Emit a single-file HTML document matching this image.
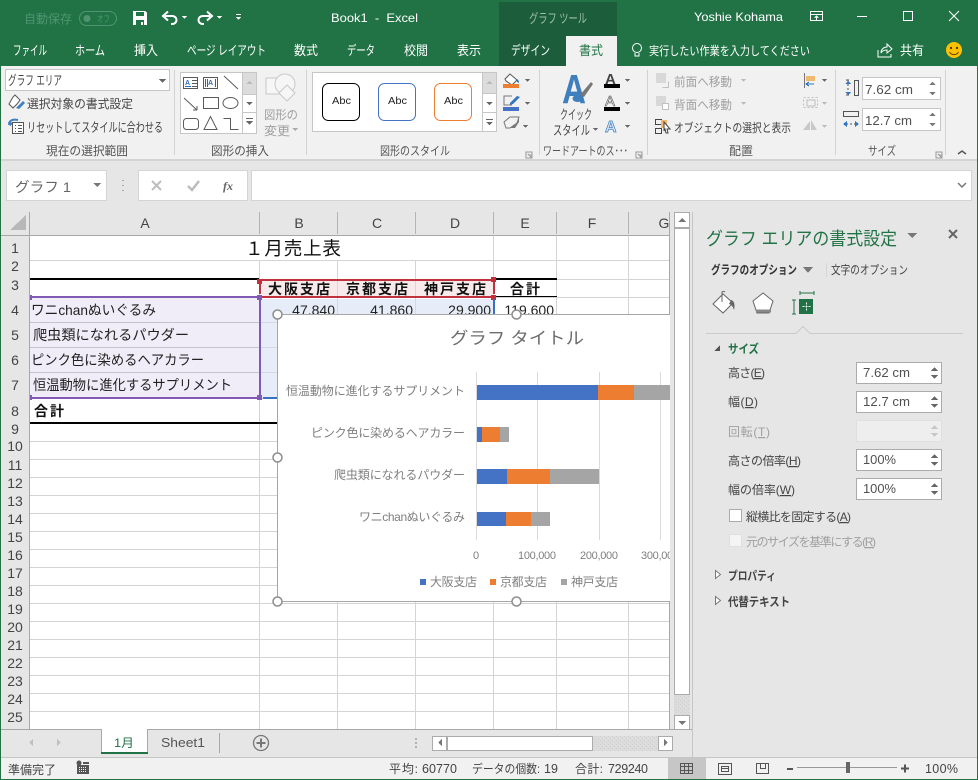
<!DOCTYPE html>
<html lang="ja"><head><meta charset="utf-8"><title>Book1 - Excel</title>
<style>
html,body{margin:0;padding:0;background:#e6e6e6;width:978px;height:780px;overflow:hidden}
svg{display:block}
text{font-family:"Liberation Sans","Noto Sans CJK JP",sans-serif;font-size:12px;fill:#444}
.w{fill:#fff}.t{fill:#fff;font-size:13px}.g{fill:#a0a0a0}.k{fill:#111}.c{font-size:14px;fill:#222}.b{font-size:14px;font-weight:bold;fill:#111}
.h{font-size:14px;fill:#444;text-anchor:middle}.n{font-size:14px;fill:#222;text-anchor:end}
.l{font-size:12px;fill:#555}.ch{font-size:12px;fill:#7f7f7f}.ax{font-size:11px;fill:#7f7f7f}.v{font-size:12px;fill:#505050}
</style></head><body>
<svg width="978" height="780" viewBox="0 0 978 780" xmlns="http://www.w3.org/2000/svg" shape-rendering="crispEdges">
<defs>
<clipPath id="chartclip"><rect x="277" y="314" width="393" height="288"/></clipPath>
<clipPath id="rowclip"><rect x="0" y="235" width="29" height="495"/></clipPath>
<pattern id="dots" width="4" height="4" patternUnits="userSpaceOnUse"><rect width="4" height="4" fill="#dcdcdc"/><rect width="1" height="1" fill="#cfcfcf"/><rect x="2" y="2" width="1" height="1" fill="#cfcfcf"/></pattern>
</defs>
<rect width="978" height="780" fill="#e6e6e6"/>
<!-- title bar -->
<rect width="978" height="66" fill="#217346"/>
<rect x="499" y="2" width="118" height="64" fill="#1c5e3b"/>
<rect x="566" y="36" width="51" height="30" fill="#f1f1f1"/>
<text x="24" y="23" textLength="48" lengthAdjust="spacingAndGlyphs" style="fill:#4f9470">自動保存</text>
<rect x="79.500" y="11.500" width="37" height="14" rx="7" fill="none" stroke="#4f9470"/>
<circle cx="87" cy="18.500" r="3.500" fill="#4f9470" shape-rendering="auto"/>
<text x="97" y="22" textLength="13" lengthAdjust="spacingAndGlyphs" style="font-size:9px;fill:#4f9470">オフ</text>
<path d="M133 11h12l2 2v12h-14z" fill="#fff"/><rect x="136" y="12" width="8" height="4" fill="#217346"/><rect x="136" y="20" width="8" height="5" fill="#217346"/><rect x="141" y="22" width="2" height="3" fill="#fff"/>
<g fill="none" stroke="#fff" stroke-width="2" shape-rendering="auto"><path d="M165 16h7c6 0 6 8 0 8h-1"/><path d="M168 11.500l-5 4.500 5 4.500"/><path d="M210 16h-7c-6 0-6 8 0 8h1"/><path d="M207 11.500l5 4.500-5 4.500"/></g>
<path d="M182 16h5l-2.500 3zM217 16h5l-2.500 3zM236 17h5l-2.500 3z" fill="#fff"/><rect x="236" y="14" width="5" height="1" fill="#fff"/>
<text x="331" y="22" textLength="87" lengthAdjust="spacingAndGlyphs" class="w" xml:space="preserve">Book1  -  Excel</text>
<text x="529" y="23" textLength="58" lengthAdjust="spacingAndGlyphs" style="fill:#9dbfac;font-size:13px">グラフ ツール</text>
<text x="694" y="21" textLength="89" lengthAdjust="spacingAndGlyphs" class="w">Yoshie Kohama</text>
<path d="M810.500 11.500h12v9h-12zM810.500 14.500h12M816.500 20v-4M814.500 18l2-2 2 2" fill="none" stroke="#fff"/>
<rect x="857" y="16" width="10" height="1" fill="#fff"/>
<rect x="903.500" y="11.500" width="9" height="9" fill="none" stroke="#fff"/>
<path d="M949 11l10 10M959 11l-10 10" stroke="#fff" shape-rendering="auto"/>
<text x="13" y="55" textLength="34" lengthAdjust="spacingAndGlyphs" class="t">ファイル</text>
<text x="75" y="55" textLength="30" lengthAdjust="spacingAndGlyphs" class="t">ホーム</text>
<text x="134" y="55" textLength="24" lengthAdjust="spacingAndGlyphs" class="t">挿入</text>
<text x="187" y="55" textLength="79" lengthAdjust="spacingAndGlyphs" class="t">ページ レイアウト</text>
<text x="294" y="55" textLength="24" lengthAdjust="spacingAndGlyphs" class="t">数式</text>
<text x="347" y="55" textLength="28" lengthAdjust="spacingAndGlyphs" class="t">データ</text>
<text x="404" y="55" textLength="24" lengthAdjust="spacingAndGlyphs" class="t">校閲</text>
<text x="457" y="55" textLength="24" lengthAdjust="spacingAndGlyphs" class="t">表示</text>
<text x="511" y="55" textLength="39" lengthAdjust="spacingAndGlyphs" class="t">デザイン</text>
<text x="579" y="55" textLength="24" lengthAdjust="spacingAndGlyphs" style="fill:#217346;font-size:13px">書式</text>
<text x="649" y="55" textLength="161" lengthAdjust="spacingAndGlyphs" class="w">実行したい作業を入力してください</text>
<text x="900" y="55" textLength="24" lengthAdjust="spacingAndGlyphs" class="t">共有</text>
<g fill="none" stroke="#fff" shape-rendering="auto"><circle cx="637" cy="48" r="4.500"/><path d="M635 53v3h4v-3"/><path d="M878 50v7h13v-3M881 53c0-4 3-6 6-6v-3l5 5-5 4v-3c-3 0-5 1-6 3z"/></g>
<g shape-rendering="auto"><circle cx="954" cy="50" r="8" fill="#ffc000"/><circle cx="951" cy="48" r="1.200" fill="#5a4500"/><circle cx="957" cy="48" r="1.200" fill="#5a4500"/><path d="M949.500 52c2 3.500 7 3.500 9 0" fill="none" stroke="#5a4500"/></g>
<!-- ribbon -->
<rect x="1" y="66" width="977" height="93" fill="#f1f1f1"/>
<rect x="1" y="159" width="977" height="2" fill="#d4d4d4"/>
<rect x="566" y="64" width="51" height="3" fill="#f1f1f1"/>
<g fill="#d2d2d2"><rect x="174" y="70" width="1" height="85"/><rect x="306" y="70" width="1" height="85"/><rect x="539" y="70" width="1" height="85"/><rect x="647" y="70" width="1" height="85"/><rect x="835" y="70" width="1" height="85"/><rect x="945" y="70" width="1" height="85"/></g>
<rect x="5.500" y="69.500" width="164" height="21" fill="#fff" stroke="#c6c6c6"/>
<text x="8" y="85" textLength="54" lengthAdjust="spacingAndGlyphs" style="font-size:13px">グラフ エリア</text>
<path d="M159 79h7l-3.500 4z" fill="#666"/>
<g shape-rendering="auto"><path d="M9 104l4-7 2-2 5 5-3 4-4 4z" fill="#fff" stroke="#555"/><path d="M16 108l7-7 2 2-6 6z" fill="#3f7fc4"/></g>
<text x="27" y="108" textLength="106" lengthAdjust="spacingAndGlyphs">選択対象の書式設定</text>
<path d="M9 125c0-5 4-6 9-5" fill="none" stroke="#3f7fc4" stroke-width="2" shape-rendering="auto"/>
<path d="M8 122l2 4 3-3z" fill="#3f7fc4"/>
<rect x="12.500" y="122.500" width="11" height="11" fill="#fff" stroke="#555"/><path d="M15 125.500h1M18 125.500h4M15 128.500h1M18 128.500h4M15 131.500h1M18 131.500h4" stroke="#555"/>
<text x="27" y="132" textLength="136" lengthAdjust="spacingAndGlyphs" style="font-size:13px">リセットしてスタイルに合わせる</text>
<text x="46" y="155" textLength="82" lengthAdjust="spacingAndGlyphs" class="l">現在の選択範囲</text>
<!-- shape gallery -->
<rect x="180.500" y="72.500" width="76" height="61" fill="#fff" stroke="#c6c6c6"/>
<rect x="243" y="73" width="13" height="21" fill="#dcdcdc"/>
<path d="M243 94.500h13M243 112.500h13M242.500 73v60" stroke="#c6c6c6"/>
<path d="M246 84h7l-3.500-3z" fill="#bbb"/><path d="M246 102h7l-3.500 3z" fill="#666"/><path d="M246 121h7l-3.500 4zM246 118h7v1h-7z" fill="#666"/>
<g fill="none" stroke="#5a5a5a">
<rect x="183.500" y="77.500" width="14" height="11"/><rect x="203.500" y="77.500" width="14" height="11"/>
<path d="M192 80.500h5M192 83.500h5M192 86.500h5M205.500 79v8M207.500 79v8M215.500 79v8"/>
<path d="M224 76l14 13M184 98l13 12M197 110v-4M197 110h-4" shape-rendering="auto"/>
<rect x="203.500" y="97.500" width="15" height="11"/>
<ellipse cx="230.500" cy="103" rx="7.500" ry="5.500" shape-rendering="auto"/>
<rect x="183.500" y="118.500" width="15" height="11" rx="3" shape-rendering="auto"/>
<path d="M204 129.500h13l-6.500-13z" shape-rendering="auto"/>
<path d="M223.500 118.500h7v11h8"/>
</g>
<text x="185" y="85" style="font-size:7px;fill:#2f6eb5;font-weight:bold">A</text><text x="208" y="85" style="font-size:7px;fill:#2f6eb5;font-weight:bold">A</text>
<rect x="185" y="86" width="6" height="1" fill="#2f6eb5"/>
<g fill="#f6f6f6" stroke="#c8c8c8" shape-rendering="auto"><rect x="266" y="78" width="16" height="16"/><circle cx="285" cy="84" r="10"/><path d="M279 93l8-8 8 8-8 8z"/></g>
<text x="264" y="119" textLength="34" lengthAdjust="spacingAndGlyphs" class="g">図形の</text>
<text x="264" y="135" textLength="26" lengthAdjust="spacingAndGlyphs" class="g">変更</text>
<path d="M292 128h6l-3 3z" fill="#aaa"/>
<text x="211" y="155" textLength="58" lengthAdjust="spacingAndGlyphs" class="l">図形の挿入</text>
<!-- style gallery -->
<rect x="312.500" y="72.500" width="184" height="59" fill="#fff" stroke="#c6c6c6"/>
<rect x="483" y="73" width="13" height="20" fill="#dcdcdc"/>
<path d="M483 93.500h13M483 112.500h13M482.500 73v58" stroke="#c6c6c6"/>
<path d="M486 84h7l-3.500-3z" fill="#bbb"/><path d="M486 102h7l-3.500 3z" fill="#666"/><path d="M486 122h7l-3.500 3zM486 119h7v1h-7z" fill="#666"/>
<g fill="#fff" stroke-width="1" shape-rendering="auto">
<rect x="322.500" y="83.500" width="37" height="37" rx="6" stroke="#000"/>
<rect x="378.500" y="83.500" width="37" height="37" rx="6" stroke="#4472c4"/>
<rect x="434.500" y="83.500" width="37" height="37" rx="6" stroke="#ed7d31"/>
</g>
<text x="332" y="104" textLength="19" lengthAdjust="spacingAndGlyphs" style="font-size:10px;fill:#222">Abc</text>
<text x="388" y="104" textLength="19" lengthAdjust="spacingAndGlyphs" style="font-size:10px;fill:#222">Abc</text>
<text x="444" y="104" textLength="19" lengthAdjust="spacingAndGlyphs" style="font-size:10px;fill:#222">Abc</text>
<text x="380" y="155" textLength="70" lengthAdjust="spacingAndGlyphs" class="l">図形のスタイル</text>
<path d="M526 152h6v6h-6zM529 155h3M532 158l-4-4" fill="none" stroke="#999"/>
<!-- fill / line / effect -->
<g shape-rendering="auto">
<path d="M505 79l5-5 7 6-5 5-6-4z" fill="#fff" stroke="#555"/><path d="M516 79c2 0 3 2 3 4-2-1-3-2-3-4z" fill="#2a6cb0"/>
<path d="M517 96l-7 7v2l3-1 7-7z" fill="#2f75c0"/><path d="M512 96h-8v9h8" fill="none" stroke="#777"/>
<path d="M504 122l6-5h9l-2 6-7 5h-4z" fill="#f2f2f2" stroke="#777"/><path d="M510 128l7-5 2-6v5l-4 6z" fill="#777"/>
</g>
<rect x="503" y="84" width="16" height="4" fill="#ed7d31"/><rect x="503" y="107" width="16" height="4" fill="#4472c4"/>
<path d="M525 79h5l-2.500 3zM525 102h5l-2.500 3zM523 125h5l-2.500 3z" fill="#666"/>
<!-- wordart -->
<text x="562" y="103" style="font-size:41px;font-weight:bold;fill:#3f7fbe" textLength="24" lengthAdjust="spacingAndGlyphs">A</text>
<path d="M580 95l11-13 2 2-9 13z" fill="#777" shape-rendering="auto"/><ellipse cx="577.500" cy="98.500" rx="5" ry="3.500" fill="#3f7fbe" shape-rendering="auto"/>
<text x="560" y="119" textLength="32" lengthAdjust="spacingAndGlyphs" style="font-size:13px">クイック</text>
<text x="553" y="135" textLength="37" lengthAdjust="spacingAndGlyphs" style="font-size:13px">スタイル</text>
<path d="M593 128h5l-2.500 3z" fill="#666"/>
<text x="605" y="84" style="font-size:15px;fill:#444;font-weight:bold">A</text><rect x="604" y="84" width="16" height="4" fill="#000"/>
<text x="605" y="106" style="font-size:15px;fill:#f8f8f8;stroke:#555;stroke-width:.6">A</text><rect x="604" y="107" width="16" height="4" fill="#000"/>
<text x="605" y="132" style="font-size:16px;font-weight:bold;fill:#d5e5f6;stroke:#3f7fbe;stroke-width:.7">A</text>
<path d="M625 79h5l-2.500 3zM625 102h5l-2.500 3zM625 125h5l-2.500 3z" fill="#666"/>
<text x="543" y="155" textLength="85" lengthAdjust="spacingAndGlyphs" class="l">ワードアートのス･･･</text>
<path d="M636 152h6v6h-6zM639 155h3M642 158l-4-4" fill="none" stroke="#999"/>
<!-- arrange -->
<rect x="656" y="73" width="10" height="10" fill="#d8d8d8"/><path d="M662.500 87.500h6v-6" fill="none" stroke="#c0c0c0"/>
<rect x="656" y="96" width="10" height="10" fill="#d8d8d8"/><rect x="662.500" y="103.500" width="6" height="6" fill="#fff" stroke="#c0c0c0"/>
<text x="674" y="86" textLength="58" lengthAdjust="spacingAndGlyphs" class="g">前面へ移動</text>
<text x="674" y="109" textLength="58" lengthAdjust="spacingAndGlyphs" class="g">背面へ移動</text>
<path d="M741 79h5l-2.500 3zM741 102h5l-2.500 3z" fill="#bbb"/>
<path d="M655.500 119.500h6v5h-6zM655.500 128.500h6v5h-6z" fill="none" stroke="#444"/><rect x="661" y="120" width="6" height="8" fill="#f0b870"/><path d="M664 122l6 7-3 0 1 4-2 0-1-4-1 2z" fill="#fff" stroke="#444" shape-rendering="auto"/>
<text x="674" y="132" textLength="117" lengthAdjust="spacingAndGlyphs">オブジェクトの選択と表示</text>
<text x="729" y="155" textLength="24" lengthAdjust="spacingAndGlyphs" class="l">配置</text>
<rect x="804" y="73" width="1" height="15" fill="#777"/><rect x="806" y="76" width="9" height="5" fill="#f0b870"/><path d="M814 84h-7M809 82l-3 2 3 2" stroke="#2f75c0" fill="none"/>
<path d="M822 79h5l-2.500 3z" fill="#666"/>
<rect x="803.500" y="97.500" width="14" height="10" fill="none" stroke="#c0c0c0" stroke-dasharray="2 2"/><rect x="807" y="100" width="8" height="6" fill="none" stroke="#c0c0c0"/>
<path d="M822 102h5l-2.500 3z" fill="#bbb"/>
<path d="M803 130l7-9v9zM811 120l6 10h-6z" fill="#c8c8c8" shape-rendering="auto"/>
<path d="M822 125h5l-2.500 3z" fill="#bbb"/>
<!-- size -->
<path d="M848 80v15" stroke="#555" stroke-dasharray="2 2"/><path d="M846 80h3M846 95h3" stroke="#555"/><rect x="854.500" y="80.500" width="4" height="15" fill="none" stroke="#555"/>
<path d="M848 81l-3 3h6zM848 95l-3-3h6z" fill="#2f75c0"/>
<rect x="862.500" y="77.500" width="78" height="22" fill="#fff" stroke="#c6c6c6"/>
<rect x="862.500" y="108.500" width="78" height="22" fill="#fff" stroke="#c6c6c6"/>
<text x="865" y="94" textLength="48" lengthAdjust="spacingAndGlyphs" class="v" style="font-size:13px">7.62 cm</text>
<text x="865" y="125" textLength="47" lengthAdjust="spacingAndGlyphs" class="v" style="font-size:13px">12.7 cm</text>
<path d="M929 85h7l-3.500-3zM929 92h7l-3.500 3zM929 116h7l-3.500-3zM929 123h7l-3.500 3z" fill="#777"/>
<rect x="843.500" y="111.500" width="15" height="5" fill="none" stroke="#555"/><path d="M846 124h10" stroke="#555" stroke-dasharray="2 2"/><path d="M843 124l4-3v6zM859 124l-4-3v6z" fill="#2f75c0"/>
<text x="868" y="155" textLength="28" lengthAdjust="spacingAndGlyphs" class="l">サイズ</text>
<path d="M936 152h6v6h-6zM939 155h3M942 158l-4-4" fill="none" stroke="#999"/>
<path d="M958 154l4-3 4 3" fill="none" stroke="#555" stroke-width="1.500" shape-rendering="auto"/>
<!-- formula bar -->
<rect x="6.500" y="170.500" width="100" height="30" fill="#fff" stroke="#d4d4d4"/>
<text x="15" y="192" textLength="56" lengthAdjust="spacingAndGlyphs" style="font-size:14px;fill:#666">グラフ 1</text>
<path d="M93 183h8l-4 4z" fill="#777"/>
<path d="M123 180v1M123 185v1M123 190v1" stroke="#a8a8a8" stroke-width="2"/>
<rect x="138.500" y="170.500" width="109" height="30" fill="#fff" stroke="#d4d4d4"/>
<rect x="251.500" y="170.500" width="720" height="30" fill="#fff" stroke="#d4d4d4"/>
<path d="M958 183l4 4 4-4" fill="none" stroke="#777" stroke-width="1.500" shape-rendering="auto"/>
<path d="M152 181l9 9M161 181l-9 9" stroke="#bdbdbd" stroke-width="2" shape-rendering="auto"/>
<path d="M188 186l4 4 7-9" fill="none" stroke="#bdbdbd" stroke-width="2.500" shape-rendering="auto"/>
<text x="223" y="190" style="font-family:'Liberation Serif',serif;font-style:italic;font-weight:bold;font-size:12px;fill:#666">fx</text>
<!-- sheet -->
<rect x="0" y="211" width="670" height="24" fill="#e6e6e6"/>
<rect x="0" y="235" width="29" height="495" fill="#e6e6e6"/>
<rect x="30" y="235" width="640" height="494" fill="#fff"/>
<path d="M10 230l16-15v15z" fill="#b8b8b8"/>
<path d="M0 235.500h670M29.500 212v518" stroke="#a8a8a8"/>
<path d="M259.500 212v22M337.500 212v22M415.500 212v22M493.500 212v22M556.500 212v22M628.500 212v22" stroke="#b4b4b4"/>
<path d="M259.500 236v493M337.500 236v493M415.500 236v493M493.500 236v493M556.500 236v493M628.500 236v493M30 260.500h640M30 279.500h640M30 297.500h640M30 322.500h640M30 347.500h640M30 372.500h640M30 398.500h640M30 423.500h640M30 441.500h640M30 459.500h640M30 477.500h640M30 495.500h640M30 513.500h640M30 531.500h640M30 549.500h640M30 567.500h640M30 585.500h640M30 603.500h640M30 621.500h640M30 639.500h640M30 657.500h640M30 675.500h640M30 693.500h640M30 711.500h640" stroke="#d4d4d4" fill="none"/>
<rect x="30" y="236" width="463" height="24" fill="#fff"/>
<path d="M669.500 212v517.500H0" stroke="#a8a8a8" fill="none"/>
<!-- col headers -->
<text class="h" x="145" y="228">A</text><text class="h" x="299" y="228">B</text><text class="h" x="377" y="228">C</text><text class="h" x="455" y="228">D</text><text class="h" x="525" y="228">E</text><text class="h" x="592" y="228">F</text><text class="h" x="664" y="228">G</text>
<!-- row headers -->
<g clip-path="url(#rowclip)">
<text class="h" x="15" y="253">1</text><text class="h" x="15" y="271">2</text><text class="h" x="15" y="290">3</text><text class="h" x="15" y="315">4</text><text class="h" x="15" y="340">5</text><text class="h" x="15" y="365">6</text><text class="h" x="15" y="390">7</text><text class="h" x="15" y="416">8</text><text class="h" x="15" y="434">9</text><text class="h" x="15" y="451">10</text><text class="h" x="15" y="470">11</text><text class="h" x="15" y="488">12</text><text class="h" x="15" y="506">13</text><text class="h" x="15" y="524">14</text><text class="h" x="15" y="542">15</text><text class="h" x="15" y="560">16</text><text class="h" x="15" y="578">17</text><text class="h" x="15" y="596">18</text><text class="h" x="15" y="614">19</text><text class="h" x="15" y="632">20</text><text class="h" x="15" y="650">21</text><text class="h" x="15" y="668">22</text><text class="h" x="15" y="686">23</text><text class="h" x="15" y="704">24</text><text class="h" x="15" y="722">25</text>
</g>
<!-- cells -->
<text x="245" y="255" textLength="96" style="font-size:18.600px;fill:#111">１月売上表</text>
<rect x="30" y="278" width="229" height="2" fill="#000"/><rect x="494" y="278" width="63" height="2" fill="#000"/>
<rect x="494" y="296" width="63" height="1" fill="#000"/>
<rect x="262" y="281" width="231" height="15" fill="#f8eaea"/>
<path d="M337.500 281v15M415.500 281v15" stroke="#e4d0d0"/>
<rect x="30" y="298" width="230" height="100" fill="#f0edf8"/>
<path d="M30 322.500h230M30 347.500h230M30 372.500h230" stroke="#c6c2cf"/>
<rect x="261" y="299" width="232" height="99" fill="#e6edf8"/>
<path d="M337.500 299v99M415.500 299v99M261 322.500h232M261 347.500h232M261 372.500h232" stroke="#d4d8e0"/>
<text x="268" y="294" textLength="62" class="b">大阪支店</text>
<text x="346" y="294" textLength="62" class="b">京都支店</text>
<text x="424" y="294" textLength="62" class="b">神戸支店</text>
<text x="510" y="294" textLength="30" class="b">合計</text>
<text class="n" x="335" y="315">47,840</text><text class="n" x="413" y="315">41,860</text><text class="n" x="491" y="315">29,900</text><text class="n" x="554" y="315">119,600</text>
<text class="c" x="31" y="315" textLength="125" lengthAdjust="spacingAndGlyphs">ワニchanぬいぐるみ</text>
<text class="c" x="33" y="340" textLength="156" lengthAdjust="spacingAndGlyphs">爬虫類になれるパウダー</text>
<text class="c" x="31" y="365" textLength="173" lengthAdjust="spacingAndGlyphs">ピンク色に染めるヘアカラー</text>
<text class="c" x="33" y="390" textLength="199" lengthAdjust="spacingAndGlyphs">恒温動物に進化するサプリメント</text>
<text class="b" x="34" y="416" textLength="30">合計</text>
<rect x="30" y="422" width="247" height="2" fill="#000"/>
<!-- range highlights -->
<path d="M259 280h234.500M259 297h234.500" stroke="#c0303d" stroke-width="2"/>
<path d="M260 282v12M494 282v12" stroke="#c0303d" stroke-width="2"/>
<g fill="#c0303d"><rect x="257" y="279" width="5" height="5"/><rect x="491" y="277" width="5" height="5"/><rect x="491" y="295" width="5" height="5"/></g>
<rect x="493" y="299" width="2" height="15" fill="#3a70c4"/>
<rect x="263" y="397" width="14" height="2" fill="#3a70c4"/>
<rect x="30" y="296" width="229" height="2" fill="#7f5bb5"/><rect x="30" y="397" width="229" height="2" fill="#7f5bb5"/><rect x="259" y="297" width="2" height="100" fill="#7f5bb5"/>
<g fill="#7f5bb5"><rect x="257" y="295" width="5" height="5"/><rect x="257" y="395" width="5" height="5"/><rect x="30" y="295" width="2" height="5"/><rect x="30" y="395" width="2" height="5"/></g>
<!-- chart -->
<rect x="277" y="314.500" width="393" height="287" fill="#fff"/>
<path d="M670 314.500H277.500V601.500H670" fill="none" stroke="#a6a6a6"/>
<g clip-path="url(#chartclip)">
<text x="450" y="344" textLength="134" lengthAdjust="spacingAndGlyphs" style="font-size:17px;fill:#6e6e6e">グラフ タイトル</text>
<path d="M476.500 372v168M537.500 372v168M599.500 372v168M660.500 372v168" stroke="#d9d9d9"/>
<g fill="#4472c4"><rect x="477" y="385" width="121" height="15"/><rect x="477" y="427" width="5" height="15"/><rect x="477" y="469" width="30" height="15"/><rect x="477" y="512" width="29" height="14"/></g>
<g fill="#ed7d31"><rect x="598" y="385" width="36" height="15"/><rect x="482" y="427" width="18" height="15"/><rect x="507" y="469" width="43" height="15"/><rect x="506" y="512" width="25" height="14"/></g>
<g fill="#a5a5a5"><rect x="634" y="385" width="36" height="15"/><rect x="500" y="427" width="9" height="15"/><rect x="550" y="469" width="49" height="15"/><rect x="531" y="512" width="19" height="14"/></g>
<text class="ch" x="286" y="395" textLength="179">恒温動物に進化するサプリメント</text>
<text class="ch" x="311" y="437" textLength="154">ピンク色に染めるヘアカラー</text>
<text class="ch" x="334" y="479" textLength="131">爬虫類になれるパウダー</text>
<text class="ch" x="359" y="521" textLength="106">ワニchanぬいぐるみ</text>
<text class="ax" x="473" y="559">0</text><text class="ax" x="518" y="559" textLength="38">100,000</text><text class="ax" x="580" y="559" textLength="38">200,000</text><text class="ax" x="641" y="559" textLength="38">300,000</text>
<rect x="420" y="579" width="6" height="6" fill="#4472c4"/><rect x="490" y="579" width="6" height="6" fill="#ed7d31"/><rect x="561" y="579" width="6" height="6" fill="#a5a5a5"/>
<text class="ch" x="430" y="586" textLength="47">大阪支店</text><text class="ch" x="500" y="586" textLength="47">京都支店</text><text class="ch" x="571" y="586" textLength="47">神戸支店</text>
</g>
<g fill="#fff" stroke="#8c8c8c" stroke-width="1.500" shape-rendering="auto"><circle cx="277.500" cy="314.500" r="4.500"/><circle cx="516.500" cy="314.500" r="4.500"/><circle cx="277.500" cy="457.500" r="4.500"/><circle cx="277.500" cy="601.500" r="4.500"/><circle cx="516.500" cy="601.500" r="4.500"/></g>
<!-- v scrollbar -->
<rect x="674" y="212" width="16" height="518" fill="url(#dots)"/>
<rect x="674.500" y="212.500" width="15" height="15" fill="#fff" stroke="#ababab"/>
<path d="M678 222h8l-4-4z" fill="#777"/>
<rect x="674.500" y="228.500" width="15" height="466" fill="#fff" stroke="#ababab"/>
<rect x="674.500" y="715.500" width="15" height="14" fill="#fff" stroke="#ababab"/>
<path d="M678 721h8l-4 4z" fill="#777"/>
<!-- sheet tabs -->
<rect x="0" y="730" width="692" height="27" fill="#e6e6e6"/>
<rect x="0" y="729" width="692" height="1" fill="#a8a8a8"/>
<rect x="101" y="729" width="47" height="25" fill="#fff"/>
<path d="M101.500 729v24M147.500 729v24" stroke="#a8a8a8"/>
<rect x="101" y="752" width="47" height="2" fill="#217346"/>
<text x="114" y="747" textLength="20" lengthAdjust="spacingAndGlyphs" style="fill:#217346">1月</text>
<text x="161" y="747" textLength="44" lengthAdjust="spacingAndGlyphs" style="font-size:13px;fill:#555">Sheet1</text>
<rect x="219" y="733" width="1" height="20" fill="#a8a8a8"/>
<path d="M33 739v7l-4-3.500zM57 739v7l4-3.500z" fill="#c0c0c0"/>
<circle cx="261" cy="743" r="7.500" fill="none" stroke="#777" stroke-width="1.300" shape-rendering="auto"/><path d="M256.500 743h9M261 738.500v9" stroke="#777" stroke-width="2"/>
<path d="M416 738v2M416 742v2M416 746v2" stroke="#b0b0b0" stroke-width="2"/>
<rect x="432" y="736" width="241" height="15" fill="url(#dots)"/>
<rect x="432.500" y="736.500" width="14" height="14" fill="#fff" stroke="#ababab"/><path d="M442 739v7l-4-3.500z" fill="#777"/>
<rect x="447.500" y="736.500" width="145" height="14" fill="#fff" stroke="#ababab"/>
<rect x="658.500" y="736.500" width="14" height="14" fill="#fff" stroke="#ababab"/><path d="M664 739v7l4-3.500z" fill="#777"/>
<rect x="692" y="212" width="1" height="545" fill="#c6c6c6"/>
<!-- panel -->
<text x="706" y="245" textLength="191" lengthAdjust="spacingAndGlyphs" style="font-size:18px;fill:#217346">グラフ エリアの書式設定</text>
<path d="M907 233h10l-5 5z" fill="#777"/>
<path d="M949 230l8 8M957 230l-8 8" stroke="#666" stroke-width="2" shape-rendering="auto"/>
<text x="711" y="274" textLength="86" lengthAdjust="spacingAndGlyphs" style="font-size:12px;font-weight:bold;fill:#333">グラフのオプション</text>
<path d="M803 267h10l-5 6z" fill="#777"/>
<rect x="826" y="263" width="1" height="14" fill="#d6d6d6"/>
<text x="831" y="274" textLength="77" lengthAdjust="spacingAndGlyphs" style="font-size:12px;fill:#444">文字のオプション</text>
<g shape-rendering="auto">
<path d="M713 304l10-10 10 9-10 10z" fill="#fff" stroke="#666"/><path d="M722 302v-10a2 2 0 0 1 3 0" fill="none" stroke="#666"/><path d="M731 300c4 1 4 6 3 10-1-3-2-5-5-6z" fill="#666"/>
<path d="M763 293l10 8-4 12h-12l-4-12z" fill="#fff" stroke="#666"/><path d="M756 311h15" stroke="#888" stroke-width="3"/>
</g>
<path d="M800 293h14M800 291v4M814 291v4M794 300v14M792 300h4M792 314h4" stroke="#217346" fill="none"/>
<rect x="799" y="299" width="14" height="15" fill="#217346"/>
<path d="M802.500 306.500h8M806.500 302.500v8" stroke="#fff" stroke-dasharray="2 1"/>
<path d="M706 333.500h90l7-7 7 7h153" fill="none" stroke="#cbcbcb" shape-rendering="auto"/>
<path d="M714 351l6-6v6z" fill="#555"/>
<text x="728" y="353" textLength="31" lengthAdjust="spacingAndGlyphs" style="font-weight:bold;fill:#217346">サイズ</text>
<text x="728" y="377" textLength="37">高さ(<tspan text-decoration="underline">E</tspan>)</text>
<text x="728" y="406" textLength="30">幅(<tspan text-decoration="underline">D</tspan>)</text>
<text x="728" y="436" textLength="42" class="g">回転(<tspan text-decoration="underline">T</tspan>)</text>
<text x="728" y="465" textLength="73">高さの倍率(<tspan text-decoration="underline">H</tspan>)</text>
<text x="728" y="494" textLength="67">幅の倍率(<tspan text-decoration="underline">W</tspan>)</text>
<g fill="#fff" stroke="#ababab"><rect x="856.500" y="362.500" width="85" height="21"/><rect x="856.500" y="391.500" width="85" height="21"/><rect x="856.500" y="449.500" width="85" height="21"/><rect x="856.500" y="478.500" width="85" height="21"/></g>
<rect x="856.500" y="420.500" width="85" height="21" fill="#eeeeee" stroke="#e0e0e0"/>
<text x="863" y="377" class="v" textLength="47" lengthAdjust="spacingAndGlyphs" style="font-size:13px">7.62 cm</text>
<text x="863" y="406" class="v" textLength="47" lengthAdjust="spacingAndGlyphs" style="font-size:13px">12.7 cm</text>
<text x="863" y="464" class="v" textLength="33" lengthAdjust="spacingAndGlyphs" style="font-size:13px">100%</text>
<text x="863" y="493" class="v" textLength="33" lengthAdjust="spacingAndGlyphs" style="font-size:13px">100%</text>
<path d="M931 371h7l-3.500-4zM931 375h7l-3.500 4zM931 400h7l-3.500-4zM931 404h7l-3.500 4zM931 458h7l-3.500-4zM931 462h7l-3.500 4zM931 487h7l-3.500-4zM931 491h7l-3.500 4z" fill="#666"/>
<path d="M931 429h7l-3.500-4zM931 433h7l-3.500 4z" fill="#c6c6c6"/>
<rect x="729.500" y="509.500" width="12" height="12" fill="#fff" stroke="#ababab"/>
<rect x="729.500" y="534.500" width="12" height="12" fill="#f4f4f4" stroke="#e0e0e0"/>
<text x="746" y="521" textLength="105">縦横比を固定する(<tspan text-decoration="underline">A</tspan>)</text>
<text x="746" y="546" textLength="130" class="g">元のサイズを基準にする(<tspan text-decoration="underline">R</tspan>)</text>
<path d="M715.500 570.500l5 4-5 4zM715.500 596.500l5 4-5 4z" fill="#fff" stroke="#777" shape-rendering="auto"/>
<text x="728" y="580" textLength="48" lengthAdjust="spacingAndGlyphs" style="font-weight:bold;fill:#444">プロパティ</text>
<text x="728" y="606" textLength="62" lengthAdjust="spacingAndGlyphs" style="font-weight:bold;fill:#444">代替テキスト</text>
<!-- status bar -->
<rect x="1" y="757" width="977" height="22" fill="#f1f1f1"/>
<rect x="1" y="757" width="977" height="1" fill="#c6c6c6"/>
<text x="8" y="774" textLength="48" lengthAdjust="spacingAndGlyphs">準備完了</text>
<circle cx="79" cy="763" r="2.500" fill="#555" shape-rendering="auto"/><rect x="77" y="765" width="12" height="9" fill="#555"/><rect x="83" y="762" width="6" height="2" fill="#555"/><path d="M79 767.500h8M79 769.500h8M79 771.500h8" stroke="#f1f1f1" stroke-dasharray="1 1"/>
<text x="389" y="773" textLength="29">平均:</text><text x="422" y="773" textLength="35" style="font-size:12.500px">60770</text>
<text x="472" y="773" textLength="68" lengthAdjust="spacingAndGlyphs">データの個数:</text><text x="544" y="773" textLength="14" style="font-size:12.500px">19</text>
<text x="575" y="773" textLength="28">合計:</text><text x="608" y="773" textLength="40" style="font-size:12.500px">729240</text>
<rect x="668" y="758" width="38" height="21" fill="#c6c6c6"/>
<path d="M680.500 763.500h12v10h-12zM680.500 766.500h12M680.500 770.500h12M684.500 763.500v10M688.500 763.500v10" fill="none" stroke="#555"/>
<path d="M718.500 763.500h13v11h-13zM721.500 766.500h7v5h-7zM722 768.500h6" fill="none" stroke="#555"/>
<path d="M756.500 763.500h12v10h-12zM760.500 763.500v5h5v-5" fill="none" stroke="#555"/>
<rect x="787" y="768" width="6" height="2" fill="#555"/>
<rect x="797" y="767" width="100" height="1" fill="#999"/>
<rect x="846" y="762" width="4" height="11" fill="#666"/>
<path d="M901 768.500h8M905 764.500v8" stroke="#555" stroke-width="2"/>
<text x="925" y="773" textLength="33" style="font-size:12.500px">100%</text>
<!-- window frame -->
<rect x="0" y="66" width="1" height="714" fill="#217346"/>
<rect x="0" y="779" width="978" height="1" fill="#217346"/>
<rect x="977" y="66" width="1" height="714" fill="#217346"/>
</svg>
</body></html>
